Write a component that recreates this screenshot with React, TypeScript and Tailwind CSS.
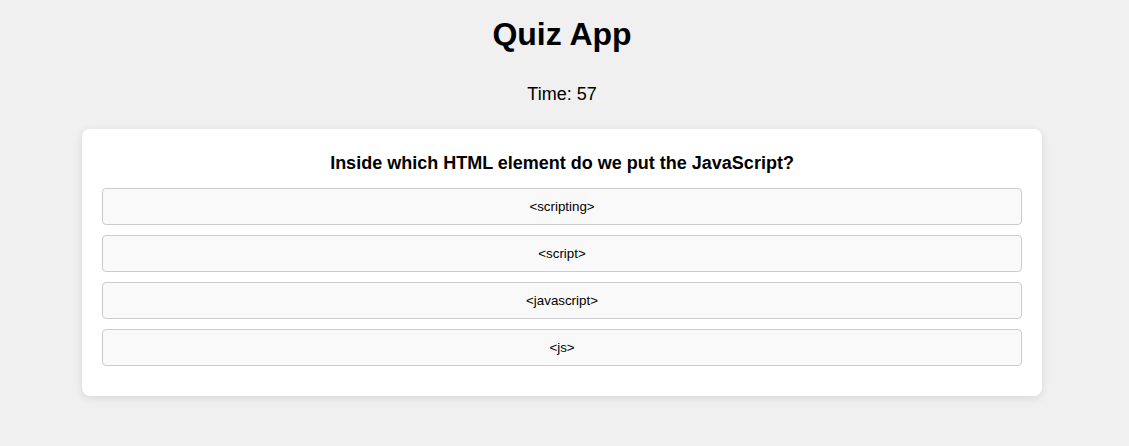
const options = ["<scripting>", "<script>", "<javascript>", "<js>"];

export default function App() {
  return (
    <div
      className="min-h-[446px] w-full bg-[#f0f0f0] flex flex-col items-center pr-[5px] text-black"
      style={{ fontFamily: '"Liberation Sans", Arial, sans-serif' }}
    >
      <h1 className="mt-[16px] text-[32px] font-bold leading-[37px]">Quiz App</h1>
      <div className="mt-[31px] text-[18px] leading-[21px]">Time: 57</div>
      <div className="mt-[24px] w-[960px] bg-white rounded-[8px] shadow-[0_2px_8px_rgba(0,0,0,0.1)] px-[20px] pt-[24px] pb-[20px]">
        <h2 className="text-[18px] font-bold leading-[21px] text-center mb-[14px]">
          Inside which HTML element do we put the JavaScript?
        </h2>
        <div className="flex flex-col gap-[10px] mb-[10px]">
          {options.map((o) => (
            <button
              key={o}
              className="w-full h-[37px] bg-[#f9f9f9] border border-[#cccccc] rounded-[4px] text-[13.33px] text-black"
            >
              {o}
            </button>
          ))}
        </div>
      </div>
    </div>
  );
}
